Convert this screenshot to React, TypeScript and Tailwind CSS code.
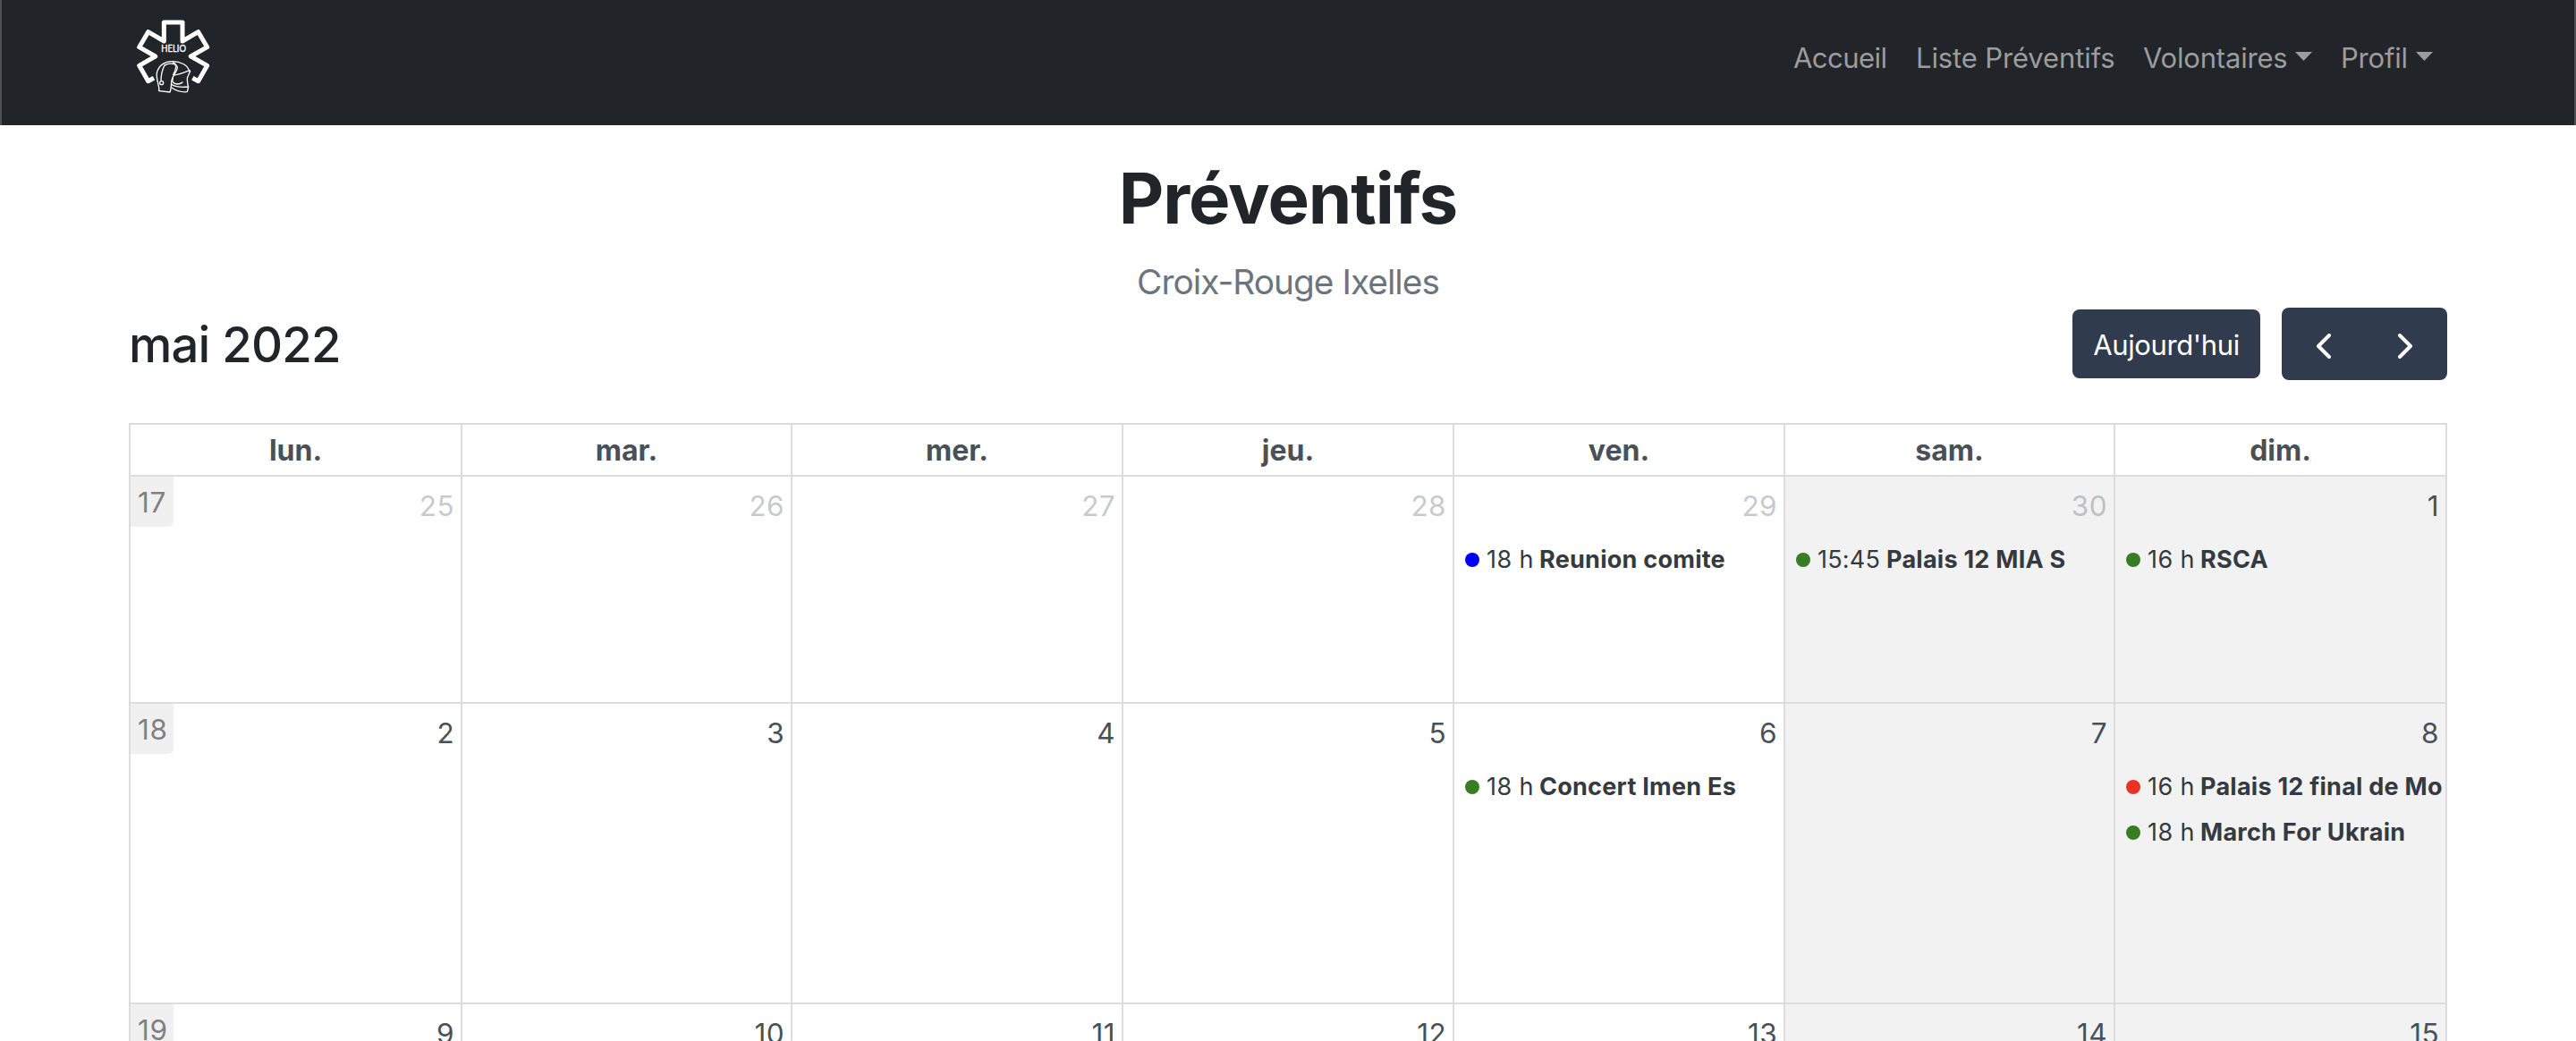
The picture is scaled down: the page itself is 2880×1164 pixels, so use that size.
import React from "react";

type Tone = "green" | "blue" | "red";
type CalendarEvent = { time: string; title: string; tone: Tone };
type Day = { label: string; outside?: boolean; events?: CalendarEvent[] };
type Week = { number: string; height: string; days: Day[] };

const dotColors: Record<Tone, string> = {
  green: "bg-[#377d22]",
  blue: "bg-[#0000f5]",
  red: "bg-[#ea3323]",
};

const weekdays = ["lun.", "mar.", "mer.", "jeu.", "ven.", "sam.", "dim."];

const weeks: Week[] = [
  {
    number: "17",
    height: "h-[254px]",
    days: [
      { label: "25", outside: true },
      { label: "26", outside: true },
      { label: "27", outside: true },
      { label: "28", outside: true },
      { label: "29", outside: true, events: [{ time: "18 h", title: "Reunion comite", tone: "blue" }] },
      { label: "30", outside: true, events: [{ time: "15:45", title: "Palais 12 MIA S", tone: "green" }] },
      { label: "1", events: [{ time: "16 h", title: "RSCA", tone: "green" }] },
    ],
  },
  {
    number: "18",
    height: "h-[336px]",
    days: [
      { label: "2" },
      { label: "3" },
      { label: "4" },
      { label: "5" },
      { label: "6", events: [{ time: "18 h", title: "Concert Imen Es", tone: "green" }] },
      { label: "7" },
      {
        label: "8",
        events: [
          { time: "16 h", title: "Palais 12 final de Mo", tone: "red" },
          { time: "18 h", title: "March For Ukrain", tone: "green" },
        ],
      },
    ],
  },
  {
    number: "19",
    height: "h-[254px]",
    days: ["9", "10", "11", "12", "13", "14", "15"].map((label) => ({ label })),
  },
];

const gridColumns = "grid grid-cols-[371px_369px_370px_370px_370px_369px_371px]";

function Logo() {
  return (
    <svg viewBox="60 60 258 264" className="h-[88px] w-[86px]" fill="none" stroke="#fff" strokeLinejoin="round">
      <path
        d="M126 262 L107 272 L77 220 L131 189 L77 158 L107 107 L160 138 V75 H222 V138 L275 107 L305 158 L250 189 L305 220 L275 272 L256 262"
        strokeWidth="15"
      />
      <text
        x="151"
        y="174"
        textLength="83"
        lengthAdjust="spacingAndGlyphs"
        fill="#fff"
        strokeWidth="1"
        className="font-['Lato',sans-serif] text-[33px]"
      >
        HELIO
      </text>
      <g strokeWidth="4" strokeLinecap="round">
        <path d="M143 304 C147 292 133 270 136 245 C142 218 165 205 190 206 C215 207 236 217 242 232 L248 240" />
        <path d="M162 219 C154 234 150 252 150 271" />
        <path d="M163 219 C178 208 206 214 205 228 C203 244 186 254 185 276 C184 290 184 300 180 309 L143 305" />
        <path d="M190 210 C206 214 200 236 191 250 C200 256 226 244 246 236" />
        <path d="M190 262 C186 272 190 282 204 282 C212 282 218 280 222 276" />
        <path d="M247 240 L238 262 C238 272 238 282 242 291 L238 308 C218 310 200 304 186 294 M186 284 C204 294 224 293 242 291" />
        <circle cx="152" cy="278" r="6" />
      </g>
    </svg>
  );
}

function Caret() {
  return (
    <svg viewBox="0 0 20 10" className="mt-[17px] h-[10px] w-[19px]" preserveAspectRatio="none" fill="currentColor">
      <path d="M0 0H20L10 10Z" />
    </svg>
  );
}

function Navbar() {
  return (
    <nav className="flex h-[140px] items-start justify-between border-x-2 border-[#4d5154] bg-[#212529] pt-5 pr-[158px] pl-[148px]">
      <Logo />
      <div className="mt-[21px] flex gap-8 text-[31px] leading-[48px] text-[#9b9c9e]">
        <a className="w-[105px] tracking-[-0.55px]">Accueil</a>
        <a className="w-[222px] whitespace-nowrap tracking-[-0.12px]">Liste Préventifs</a>
        <a className="flex w-[189px] justify-between tracking-[-0.19px]">
          Volontaires
          <Caret />
        </a>
        <a className="flex w-[103px] justify-between tracking-[-0.22px]">
          Profil
          <Caret />
        </a>
      </div>
    </nav>
  );
}

function Chevron({ path }: { path: string }) {
  return (
    <svg viewBox="0 0 16 28" className="h-7 w-4" fill="none" stroke="#fff" strokeWidth="4" strokeLinecap="round" strokeLinejoin="round">
      <path d={path} />
    </svg>
  );
}

function Toolbar() {
  return (
    <div className="flex h-[81px] items-center justify-between">
      <h2 className="text-[54.4px] leading-[64px] font-medium tracking-[-0.8px] text-[#212529]">mai 2022</h2>
      <div className="flex items-center gap-6">
        <button className="h-[77px] w-[210px] rounded-lg bg-[#303c4e] pt-[2px] text-[31px] leading-[48px] tracking-[-0.37px] text-white">
          Aujourd'hui
        </button>
        <div className="flex h-[81px] w-[185px] items-center rounded-lg bg-[#303c4e] pt-[5px] pb-[1px] pl-[39px]">
          <button className="flex w-[91px]">
            <Chevron path="M14 2 L2 14 L14 26" />
          </button>
          <button className="flex">
            <Chevron path="M2 2 L14 14 L2 26" />
          </button>
        </div>
      </div>
    </div>
  );
}

function EventRow({ event }: { event: CalendarEvent }) {
  return (
    <div className="flex h-[41px] items-center pl-3 text-[27px] leading-[41px] whitespace-nowrap text-[#343a40]">
      <span className={`mt-px size-4 shrink-0 rounded-full ${dotColors[event.tone]}`} />
      {event.time.includes(":") ? (
        <span className="ml-2 w-[77px] shrink-0 tracking-[0.2px]">{event.time}</span>
      ) : (
        <span className="ml-2 w-[59px] shrink-0 tracking-[0.4px]">{event.time}</span>
      )}
      <span className="font-bold tracking-[0.26px]">{event.title}</span>
    </div>
  );
}

function DayCell({ day, weekend, weekNumber }: { day: Day; weekend: boolean; weekNumber?: string }) {
  return (
    <div className={`relative border-r-2 border-b-2 border-[#dcdcdc] ${weekend ? "bg-[#f2f2f2]" : "bg-white"}`}>
      {weekNumber && (
        <span className="absolute top-0 left-0 h-14 w-12 rounded-br-md bg-[#f0f0f0] pt-[5px] pl-2 text-[31.5px] leading-[48px] tracking-[0.6px] text-[#808080]">
          {weekNumber}
        </span>
      )}
      <div
        className={`h-[72px] pt-[9px] pr-[7px] text-right text-[31.5px] leading-[48px] tracking-[0.4px] text-[#495057] ${
          day.outside ? "opacity-30" : ""
        }`}
      >
        {day.label}
      </div>
      <div className="flex flex-col gap-[10px]">
        {day.events?.map((event) => (
          <EventRow key={event.title} event={event} />
        ))}
      </div>
    </div>
  );
}

function Calendar() {
  return (
    <div className="mt-12 border-t-2 border-l-2 border-[#dcdcdc]">
      <div className={gridColumns}>
        {weekdays.map((name) => (
          <div
            key={name}
            className="h-[58px] border-r-2 border-b-2 border-[#dcdcdc] pt-px text-center text-[32px] leading-[56px] font-bold text-[#495057]"
          >
            {name}
          </div>
        ))}
      </div>
      {weeks.map((week) => (
        <div key={week.number} className={`${gridColumns} ${week.height}`}>
          {week.days.map((day, i) => (
            <DayCell key={day.label} day={day} weekend={i > 4} weekNumber={i === 0 ? week.number : undefined} />
          ))}
        </div>
      ))}
    </div>
  );
}

export default function App() {
  return (
    <div className="h-[1164px] overflow-hidden bg-white font-['Inter',sans-serif]">
      <Navbar />
      <main className="mx-auto w-[2592px]">
        <header className="pt-[34px] text-center">
          <h1 className="text-[78px] leading-[96px] font-bold tracking-[-1.05px] text-[#212529]">Préventifs</h1>
          <p className="mt-4 text-[38.8px] leading-[58px] tracking-[-0.97px] text-[#6c757d]">Croix-Rouge Ixelles</p>
        </header>
        <Toolbar />
        <Calendar />
      </main>
    </div>
  );
}
